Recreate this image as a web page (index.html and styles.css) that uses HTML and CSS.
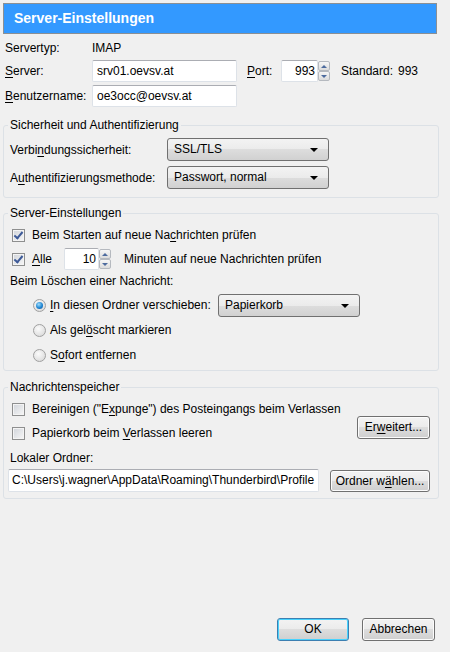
FILE: index.html
```html
<!DOCTYPE html>
<html lang="de">

<head>
    <meta charset="UTF-8">
    <title>Server-Einstellungen</title>
    <link rel="stylesheet" href="styles.css">
</head>

<body>
    <div class="dialog">
        <div class="header">Server-Einstellungen</div>

        <div class="top">
            <div class="row r-type">
                <span class="lbl">Servertyp:</span>
                <span>IMAP</span>
            </div>
            <div class="row r-field">
                <span class="lbl"><u>S</u>erver:</span>
                <span class="textbox host">srv01.oevsv.at</span>
                <span class="port-lbl"><u>P</u>ort:</span>
                <span class="spin">
                    <span class="textbox num port">993</span>
                    <span class="spin-btns"><span class="up"></span><span class="down"></span></span>
                </span>
                <span class="std">Standard:</span>
                <span class="std-val">993</span>
            </div>
            <div class="row r-field r-user">
                <span class="lbl"><u>B</u>enutzername:</span>
                <span class="textbox host">oe3occ@oevsv.at</span>
            </div>
        </div>

        <fieldset class="group g-security">
            <legend>Sicherheit und Authentifizierung</legend>
            <div class="row r-select">
                <span class="lbl wide">Verbi<u>n</u>dungssicherheit:</span>
                <span class="combo sec">SSL/TLS</span>
            </div>
            <div class="row r-select r-gap">
                <span class="lbl wide">A<u>u</u>thentifizierungsmethode:</span>
                <span class="combo sec">Passwort, normal</span>
            </div>
        </fieldset>

        <fieldset class="group g-server">
            <legend>Server-Einstellungen</legend>
            <div class="row r-check">
                <span class="check on"></span>
                <span>Beim Starten auf neue Na<u>c</u>hrichten prüfen</span>
            </div>
            <div class="row r-every">
                <span class="check on"></span>
                <span class="every-lbl"><u>A</u>lle</span>
                <span class="spin">
                    <span class="textbox num minutes">10</span>
                    <span class="spin-btns"><span class="up"></span><span class="down"></span></span>
                </span>
                <span class="every-txt">Minuten auf neue Nachrichten prüfen</span>
            </div>
            <div class="row r-delete">Beim Löschen einer Nachricht:</div>
            <div class="radios">
                <div class="row r-radio">
                    <span class="radio on"></span>
                    <span class="radio-lbl"><u>I</u>n diesen Ordner verschieben:</span>
                    <span class="combo trash">Papierkorb</span>
                </div>
                <div class="row r-radio">
                    <span class="radio"></span>
                    <span>Als gel<u>ö</u>scht markieren</span>
                </div>
                <div class="row r-radio">
                    <span class="radio"></span>
                    <span>S<u>o</u>fort entfernen</span>
                </div>
            </div>
        </fieldset>

        <fieldset class="group g-store">
            <legend>Nachrichtenspeicher</legend>
            <div class="split">
                <div>
                    <div class="row r-check">
                        <span class="check"></span>
                        <span>Bereinigen ("E<u>x</u>punge") des Posteingangs beim Verlassen</span>
                    </div>
                    <div class="row r-check r-check2">
                        <span class="check"></span>
                        <span>Papierkorb beim <u>V</u>erlassen leeren</span>
                    </div>
                </div>
                <span class="button adv">Er<u>w</u>eitert...</span>
            </div>
            <div class="row r-local">Lokaler Ordner:</div>
            <div class="row r-path">
                <span class="textbox path">C:\Users\j.wagner\AppData\Roaming\Thunderbird\Profile</span>
                <span class="button choose">Ordner w<u>ä</u>hlen...</span>
            </div>
        </fieldset>

        <div class="footer">
            <span class="button default ok">OK</span>
            <span class="button cancel">Abbrechen</span>
        </div>
    </div>
</body>

</html>
```

FILE: styles.css
```css
body {
    margin: 0;
    background-color: #f0f0f0;
    font-family: "Liberation Sans", Arial, sans-serif;
    font-size: 12px;
    color: #000;
}

u {
    text-decoration-thickness: 1px;
    text-underline-offset: 2px;
}

.dialog {
    height: 652px;
    box-sizing: border-box;
    padding: 3px 12px 11px 3px;
    display: flex;
    flex-direction: column;
}

.header {
    height: 31px;
    width: 434px;
    box-sizing: border-box;
    border: 1px solid #8a8f94;
    background-color: #3399ff;
    color: #fff;
    font-weight: bold;
    font-size: 14px;
    padding-left: 10px;
    line-height: 29px;
}

.row {
    display: flex;
    align-items: center;
    white-space: nowrap;
}

/* top area */
.top {
    padding-left: 2px;
}

.lbl {
    width: 87px;
    flex: none;
}

.lbl.wide {
    width: 157px;
}

.r-type {
    height: 18px;
    margin-top: 5px;
}

.r-field {
    height: 22px;
    margin-top: 3px;
}

.textbox {
    display: block;
    box-sizing: border-box;
    height: 22px;
    line-height: 20px;
    background: #fff;
    border: 1px solid #dde2e8;
    border-top-color: #abadb3;
    border-radius: 2px;
    padding: 0 4px;
    overflow: hidden;
    white-space: nowrap;
}

.host {
    width: 145px;
}

.port-lbl {
    margin-left: 10px;
    width: 34px;
}

.num {
    text-align: right;
    padding: 0 2px 0 0;
}

.port {
    width: 37px;
}

.spin {
    display: flex;
    height: 22px;
}

.spin-btns {
    width: 12px;
    display: flex;
    flex-direction: column;
    padding: 1px 0;
    box-sizing: border-box;
}

.spin-btns span {
    flex: 1;
    position: relative;
    border: 1px solid #b5b9bf;
    background: linear-gradient(#f6f6f6, #dcdcdc);
    border-radius: 2px;
}

.spin-btns span::after {
    content: "";
    position: absolute;
    left: 2px;
    top: 3px;
    border-left: 3px solid transparent;
    border-right: 3px solid transparent;
}

.spin-btns .up::after {
    border-bottom: 3px solid #4d6b9e;
}

.spin-btns .down::after {
    border-top: 3px solid #4d6b9e;
}

.std {
    margin-left: 11px;
    width: 57px;
}

/* groups */
.group {
    width: 436px;
    box-sizing: border-box;
    margin: 11px 0 0;
    border: 1px solid #dce1e6;
    border-radius: 3px;
    padding: 6px 8px 8px 6px;
    min-width: 0;
}

.group legend {
    padding: 0 2px;
    margin-left: -2px;
    line-height: 14px;
}

.r-select {
    height: 23px;
}

.r-gap {
    margin-top: 5px;
}

.combo {
    display: block;
    box-sizing: border-box;
    height: 23px;
    line-height: 21px;
    border: 1px solid #707070;
    border-radius: 3px;
    background: linear-gradient(#f3f3f3 0%, #ebebeb 50%, #dddddd 50%, #d1d1d1 100%);
    padding-left: 6px;
    position: relative;
}

.combo::after {
    content: "";
    position: absolute;
    right: 10px;
    top: 9px;
    border-left: 4px solid transparent;
    border-right: 4px solid transparent;
    border-top: 4px solid #000;
}

.sec {
    width: 162px;
}

.g-server {
    margin-top: 8px;
    padding-bottom: 2px;
}

.r-check {
    height: 18px;
}

.check {
    width: 13px;
    height: 13px;
    box-sizing: border-box;
    flex: none;
    margin: 0 7px 0 2px;
    border: 1px solid #8e8f8f;
    background: linear-gradient(135deg, #d0d4da, #f7f7f7);
    box-shadow: inset 0 0 0 1px #f4f4f4;
    position: relative;
}

.check.on::after {
    content: "";
    position: absolute;
    left: 3px;
    top: 0px;
    width: 3px;
    height: 7px;
    border: solid #3d5a98;
    border-width: 0 2px 2px 0;
    transform: rotate(40deg);
}

.r-every {
    height: 22px;
    margin-top: 4px;
}

.every-lbl {
    width: 32px;
}

.minutes {
    width: 35px;
}

.every-txt {
    margin-left: 13px;
}

.r-delete {
    height: 18px;
    margin-top: 2px;
}

.radios {
    padding-left: 23px;
    margin-top: 3px;
}

.r-radio {
    height: 24px;
    margin-bottom: 1px;
}

.radio {
    width: 13px;
    height: 13px;
    box-sizing: border-box;
    flex: none;
    margin-right: 4px;
    border-radius: 50%;
    border: 1px solid #a0a0a0;
    background: radial-gradient(circle at 40% 35%, #fbfbfb, #d4d4d4);
    position: relative;
}

.radio.on::after {
    content: "";
    position: absolute;
    left: 2px;
    top: 2px;
    width: 7px;
    height: 7px;
    border-radius: 50%;
    background: radial-gradient(circle at 40% 35%, #9fdcfb, #1f86d3 55%, #124f94);
}

.radio-lbl {
    width: 168px;
}

.trash {
    width: 142px;
}

.g-store {
    margin-top: 9px;
    padding-bottom: 6px;
}

.split {
    display: flex;
    justify-content: space-between;
    align-items: flex-end;
}

.r-check2 {
    margin-top: 6px;
}

.button {
    display: block;
    box-sizing: border-box;
    height: 23px;
    line-height: 21px;
    text-align: center;
    border: 1px solid #707070;
    border-radius: 3px;
    background: linear-gradient(#f3f3f3 0%, #ebebeb 50%, #dddddd 50%, #cfcfcf 100%);
    box-shadow: inset 0 0 0 1px #fcfcfc;
}

.adv {
    width: 73px;
    margin-bottom: 3px;
}

.r-local {
    height: 18px;
    margin-top: 7px;
}

.r-path {
    height: 23px;
    margin-top: 2px;
    justify-content: space-between;
}

.path {
    width: 311px;
    height: 23px;
    margin-left: -2px;
    padding: 0 3px;
}

.choose {
    width: 100px;
    height: 22px;
    line-height: 20px;
}

.footer {
    margin-top: auto;
    display: flex;
    justify-content: flex-end;
    gap: 13px;
    padding-right: 3px;
}

.ok {
    width: 72px;
}

.cancel {
    width: 73px;
}

.button.default {
    border-color: #3c7fb1;
    box-shadow: inset 0 0 0 1px #48d2fd;
}
```
